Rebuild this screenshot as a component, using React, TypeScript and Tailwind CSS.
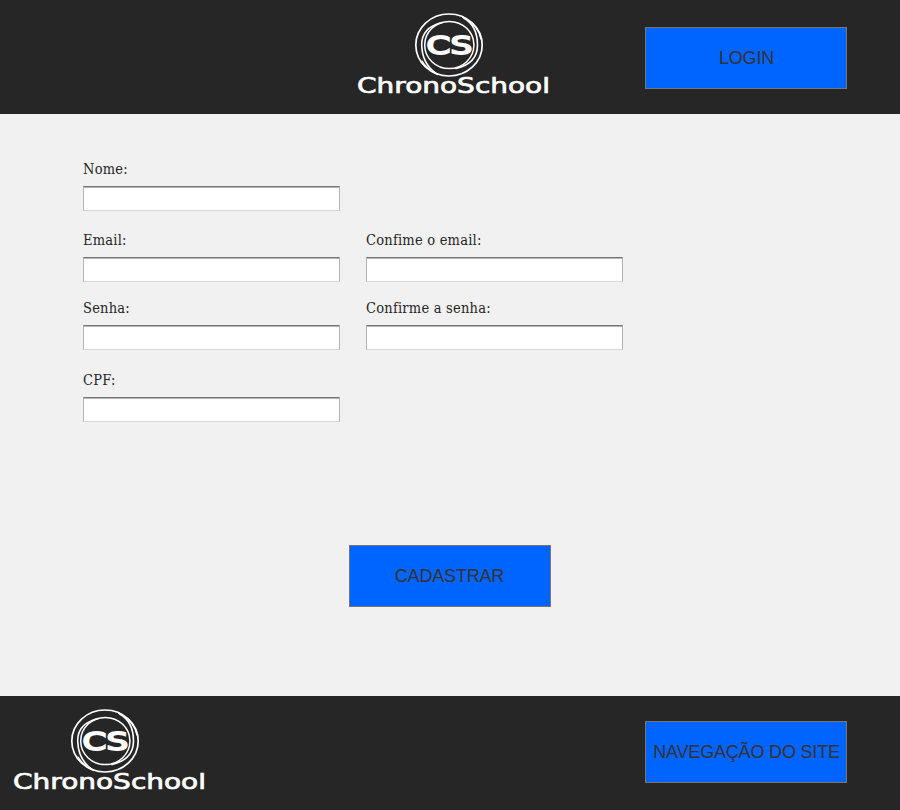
function Logo() {
  return (
    <svg width="200" height="90" viewBox="0 0 200 90" className="block shrink-0" role="img" aria-label="ChronoSchool">
      <g fill="none" stroke="#fff" strokeLinecap="round">
        <ellipse cx="95" cy="36" rx="33.2" ry="31" strokeWidth="1.7" />
        <ellipse cx="95.300" cy="36" rx="24.6" ry="23.6" strokeWidth="1.5" />
        <path d="M88 13.500C74 17 67.500 25 67.700 36C68 48 73 58 82 64.500" strokeWidth="1.6" />
        <path d="M109 8.500C119 14 123.500 24 123.500 36C123.500 47 117 56 102 59.500" strokeWidth="1.6" />
        <path d="M109 8C118 13 125 20 127 30M68 52C72 59 77 62 84 65.500" strokeWidth="1.4" />
      </g>
      <text x="72.600" y="45" fill="#fff" stroke="#fff" strokeWidth="1.8" fontFamily="'DejaVu Sans', sans-serif" fontSize="24.500" textLength="45.500" lengthAdjust="spacingAndGlyphs">CS</text>
      <text x="3" y="83.700" fill="#fff" stroke="#fff" strokeWidth="0.7" fontFamily="'DejaVu Sans', sans-serif" fontSize="22" textLength="193" lengthAdjust="spacingAndGlyphs">ChronoSchool</text>
    </svg>
  );
}

function ActionButton({ label, className = "" }: { label: string; className?: string }) {
  return (
    <button className={`h-[62px] w-[202px] shrink-0 whitespace-nowrap border border-[#767676] bg-[#0064ff] font-['Liberation_Sans',Arial,sans-serif] text-[18px] tracking-[-0.18px] text-[#333] ${className}`}>
      {label}
    </button>
  );
}

function Field({ label, type = "text" }: { label: string; type?: string }) {
  return (
    <label className="block w-[257px]">
      <span className="block h-[26px] whitespace-nowrap text-[14.5px] leading-[18px] tracking-[0.22px]">{label}</span>
      <input
        type={type}
        className="block h-[25px] w-full border border-b-[#d8d8d8] border-l-[#b4b4b4] border-r-[#b4b4b4] border-t-[#767676] bg-white px-1 shadow-[inset_0_1px_0_#b4b4b4] outline-none"
      />
    </label>
  );
}

export default function App() {
  return (
    <div className="flex h-[810px] w-[900px] flex-col overflow-hidden bg-[#f1f1f1] font-['DejaVu_Serif_Condensed','DejaVu_Serif',serif] text-[#262626]">
      <header className="flex h-[114px] shrink-0 items-start justify-between bg-[#262626] pl-[354px] pr-[53px]">
        <div className="pt-[9px]"><Logo /></div>
        <div className="pt-[27px]"><ActionButton label="LOGIN" className="pl-px" /></div>
      </header>
      <main className="flex h-[582px] shrink-0 flex-col px-[83px] pt-[46px]">
        <div className="h-[71px]"><Field label="Nome:" /></div>
        <div className="flex h-[68px] gap-[26px]">
          <Field label="Email:" />
          <Field label="Confime o email:" />
        </div>
        <div className="flex h-[72px] gap-[26px]">
          <Field label="Senha:" type="password" />
          <Field label="Confirme a senha:" type="password" />
        </div>
        <Field label="CPF:" />
        <div className="mt-[123px] flex justify-center"><ActionButton label="CADASTRAR" className="pr-px" /></div>
      </main>
      <footer className="flex h-[114px] shrink-0 items-start justify-between bg-[#262626] pl-[10px] pr-[53px]">
        <div className="pt-[9px]"><Logo /></div>
        <div className="pt-[25px]"><ActionButton label="NAVEGAÇÃO DO SITE" className="pl-px" /></div>
      </footer>
    </div>
  );
}
